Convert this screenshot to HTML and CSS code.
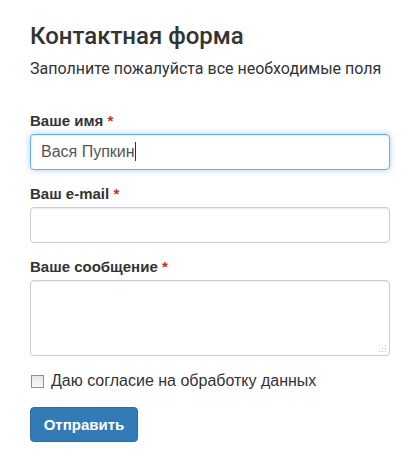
FILE: index.html
```
<!DOCTYPE html>
<html>
<head>
<meta charset="utf-8">
<title>Контактная форма</title>
<link rel="stylesheet" href="styles.css">
</head>
<body>
<div class="contact">
  <h1 class="contact-title">Контактная форма</h1>
  <p class="contact-lead">Заполните пожалуйста все необходимые поля</p>

  <form class="contact-form">
    <div class="form-group">
      <label class="form-label" for="name">Ваше имя <span class="req">*</span></label>
      <div class="form-control is-focus" id="name">Вася Пупкин<span class="caret"></span></div>
    </div>
    <div class="form-group">
      <label class="form-label" for="email">Ваш e-mail <span class="req">*</span></label>
      <div class="form-control" id="email"></div>
    </div>
    <div class="form-group">
      <label class="form-label" for="msg">Ваше сообщение <span class="req">*</span></label>
      <div class="form-control form-textarea" id="msg">
        <svg class="grip" width="8" height="8" viewBox="0 0 8 8">
          <g fill="#bbb">
            <rect x="6" y="0" width="1" height="1"/>
            <rect x="3" y="3" width="1" height="1"/>
            <rect x="6" y="3" width="1" height="1"/>
            <rect x="0" y="6" width="1" height="1"/>
            <rect x="3" y="6" width="1" height="1"/>
            <rect x="6" y="6" width="1" height="1"/>
          </g>
        </svg>
      </div>
    </div>
    <label class="check">
      <span class="check-box"></span>
      <span class="check-text">Даю согласие на обработку данных</span>
    </label>
    <button type="button" class="btn">Отправить</button>
  </form>
</div>
</body>
</html>
```
FILE: styles.css
```
body {
  margin: 0;
  background-color: white;
  font-family: "Liberation Sans", Arial, sans-serif;
  color: #333;
}

.contact {
  width: 360px;
  padding: 22px 30px 0;
}

.contact-title {
  font-family: Roboto, "Liberation Sans", sans-serif;
  font-weight: 500;
  font-size: 24px;
  line-height: 28px;
  margin: 0;
  color: #333;
}

.contact-lead {
  font-family: Roboto, "Liberation Sans", sans-serif;
  font-size: 16px;
  line-height: 20px;
  margin: 9px 0 0;
  color: #333;
}

.contact-form {
  margin-top: 33px;
}

.form-group {
  margin-bottom: 15px;
}

.form-label {
  display: block;
  font-weight: bold;
  font-size: 15px;
  line-height: 18px;
  margin-bottom: 4px;
}

.req {
  color: #c9302c;
}

.form-control {
  box-sizing: border-box;
  height: 36px;
  border: 1px solid #ccc;
  border-radius: 4px;
  padding: 0 10px;
  font-size: 16px;
  line-height: 34px;
  color: #555;
  box-shadow: inset 0 1px 1px rgba(0, 0, 0, 0.075);
}

.form-control.is-focus {
  border-color: #66afe9;
  box-shadow: inset 0 1px 1px rgba(0, 0, 0, 0.075), 0 0 6px rgba(102, 175, 233, 0.6);
}

.caret {
  display: inline-block;
  width: 1px;
  height: 19px;
  background: #333;
  vertical-align: -4px;
}

.form-textarea {
  position: relative;
  height: 76px;
}

.grip {
  position: absolute;
  right: 2px;
  bottom: 2px;
}

.check {
  display: flex;
  align-items: center;
  gap: 7px;
  margin-top: 0;
  padding-left: 1px;
  font-size: 16px;
  line-height: 20px;
}

.check-box {
  box-sizing: border-box;
  width: 13px;
  height: 13px;
  border: 1px solid #8f8f8f;
  background: linear-gradient(#e6e6e6, #fafafa);
}

.btn {
  display: block;
  margin-top: 16px;
  width: 108px;
  height: 35px;
  border: 1px solid #2e6da4;
  border-radius: 4px;
  background: #337ab7;
  color: white;
  font-family: "Liberation Sans", Arial, sans-serif;
  font-weight: bold;
  font-size: 15px;
  padding: 0;
}
```
